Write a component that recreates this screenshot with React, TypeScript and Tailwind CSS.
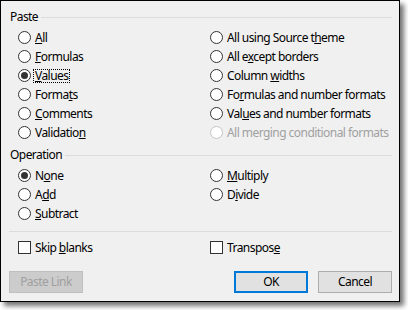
import React from 'react'

type Opt = {
  pre: string
  key?: string
  post?: string
  checked?: boolean
  focus?: boolean
  disabled?: boolean
}

function Radio({ checked, disabled }: { checked?: boolean; disabled?: boolean }) {
  return (
    <span
      className={
        disabled
          ? 'flex h-[13px] w-[13px] shrink-0 items-center justify-center rounded-full border border-[#c4c4c4] bg-white'
          : 'flex h-[13px] w-[13px] shrink-0 items-center justify-center rounded-full border border-[#333333] bg-white'
      }
    >
      {checked && <span className="h-[7px] w-[7px] rounded-full bg-[#333333]" />}
    </span>
  )
}

function Label({ opt }: { opt: Opt }) {
  return (
    <span
      className={
        opt.focus
          ? 'whitespace-nowrap border border-dotted border-black px-[1px] leading-[12px]'
          : 'whitespace-nowrap border border-transparent px-[1px] leading-[12px]'
      }
    >
      {opt.pre}
      {opt.key && <u className="underline-offset-[1px]">{opt.key}</u>}
      {opt.post}
    </span>
  )
}

function RadioRow({ opt }: { opt?: Opt }) {
  if (!opt) return <div />
  return (
    <div className={opt.disabled ? 'flex items-center gap-[2px] text-[#a0a0a0]' : 'flex items-center gap-[2px]'}>
      <Radio checked={opt.checked} disabled={opt.disabled} />
      <Label opt={opt} />
    </div>
  )
}

function Checkbox({ opt }: { opt: Opt }) {
  return (
    <div className="flex items-center gap-[2px]">
      <span className="h-[13px] w-[13px] shrink-0 border border-[#333333] bg-white" />
      <Label opt={opt} />
    </div>
  )
}

function GroupHeader({ title }: { title: string }) {
  return (
    <div className="flex h-[16px] items-center gap-[3px]">
      <span className="pl-[1px]">{title}</span>
      <div className="h-px flex-1 bg-[#dcdcdc]" />
    </div>
  )
}

const pasteOpts: Opt[] = [
  { pre: '', key: 'A', post: 'll' },
  { pre: 'All using Source t', key: 'h', post: 'eme' },
  { pre: '', key: 'F', post: 'ormulas' },
  { pre: 'All e', key: 'x', post: 'cept borders' },
  { pre: '', key: 'V', post: 'alues', checked: true, focus: true },
  { pre: 'Column ', key: 'w', post: 'idths' },
  { pre: 'Forma', key: 't', post: 's' },
  { pre: 'Fo', key: 'r', post: 'mulas and number formats' },
  { pre: '', key: 'C', post: 'omments' },
  { pre: 'Val', key: 'u', post: 'es and number formats' },
  { pre: 'Validatio', key: 'n', post: '' },
  { pre: 'All merging conditional formats', disabled: true },
]

const operationOpts: (Opt | undefined)[] = [
  { pre: 'N', key: 'o', post: 'ne', checked: true },
  { pre: '', key: 'M', post: 'ultiply' },
  { pre: 'A', key: 'd', post: 'd' },
  { pre: 'D', key: 'i', post: 'vide' },
  { pre: '', key: 'S', post: 'ubtract' },
  undefined,
]

export default function App() {
  return (
    <div className="h-[310px] w-[408px] bg-white">
      <div
        className="flex h-[302px] w-[400px] flex-col border border-black bg-[#f0f0f0] pl-[8px] pr-[7px] pt-[8px] text-[12px] text-black shadow-[4px_4px_5px_rgba(0,0,0,0.55)]"
        style={{ fontFamily: '"Segoe UI", "Noto Sans", sans-serif', letterSpacing: '-0.55px' }}
      >
        <GroupHeader title="Paste" />
        <div className="mt-[3px] grid auto-rows-[19px] grid-cols-[192px_1fr] pl-[9px]">
          {pasteOpts.map((o, i) => (
            <RadioRow key={i} opt={o} />
          ))}
        </div>

        <div className="mt-[5px]">
          <GroupHeader title="Operation" />
        </div>
        <div className="mt-[3px] grid auto-rows-[19px] grid-cols-[192px_1fr] pl-[9px]">
          {operationOpts.map((o, i) => (
            <RadioRow key={i} opt={o} />
          ))}
        </div>

        <div className="mt-[8px] h-px bg-[#dcdcdc]" />

        <div className="mt-[6px] grid h-[19px] grid-cols-[192px_1fr] pl-[9px]">
          <Checkbox opt={{ pre: 'Skip ', key: 'b', post: 'lanks' }} />
          <Checkbox opt={{ pre: 'Transpos', key: 'e', post: '' }} />
        </div>

        {/* Buttons */}
        <div className="mt-[14px] flex h-[22px] items-stretch">
          <button className="w-[74px] border border-[#bfbfbf] bg-[#cccccc] text-[#a0a0a0]" disabled>
            Paste Link
          </button>
          <div className="ml-auto flex gap-[10px]">
            <button className="w-[74px] border-2 border-[#0078d7] bg-[#e1e1e1]">OK</button>
            <button className="w-[74px] border border-[#adadad] bg-[#e1e1e1]">Cancel</button>
          </div>
        </div>
      </div>
    </div>
  )
}
